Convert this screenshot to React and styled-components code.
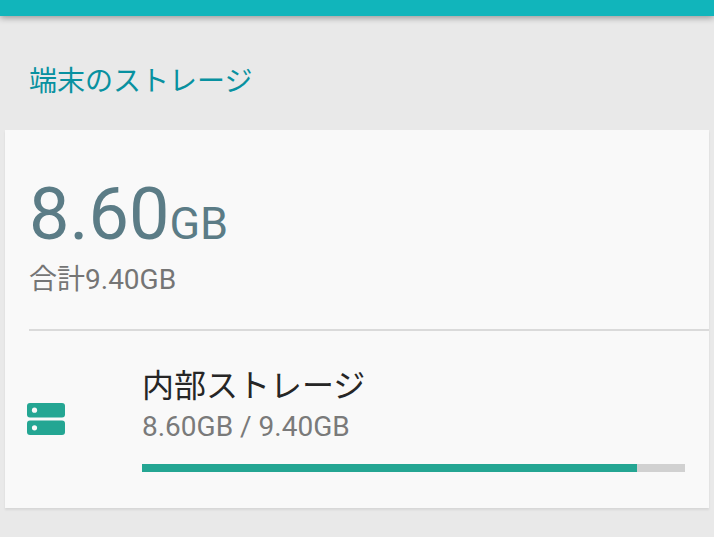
import styled, { createGlobalStyle } from 'styled-components';

const GlobalStyle = createGlobalStyle`
  * {
    box-sizing: border-box;
  }

  body {
    margin: 0;
    background-color: #e9e9e9;
    font-family: Roboto, 'Noto Sans CJK JP', sans-serif;
  }
`;

const AppBar = styled.header`
  height: 16px;
  background-color: #11b5bb;
  box-shadow: 0 2px 6px rgba(0, 0, 0, 0.35);
`;

const Page = styled.main`
  padding: 46px 5px 28px;
`;

const SectionTitle = styled.h1`
  margin: 0;
  padding: 0 24px;
  color: #0891a0;
  font-size: 28px;
  font-weight: 400;
  line-height: 40px;
`;

const Card = styled.section`
  margin-top: 28px;
  padding: 49px 0 36px;
  background-color: #f9f9f9;
  box-shadow: 0 2px 2px rgba(0, 0, 0, 0.08);
`;

const Summary = styled.div`
  margin-left: 24px;
  padding-bottom: 29px;
  border-bottom: 2px solid #dadada;
`;

const Used = styled.p`
  margin: 0;
  color: #5b7c86;
  font-size: 72px;
  line-height: 72px;
`;

const Unit = styled.span`
  font-size: 45px;
  line-height: 1;
`;

const Total = styled.p`
  margin: 0;
  padding-top: 9px;
  color: #757575;
  font-size: 28px;
  line-height: 40px;
`;

const Volume = styled.a`
  display: flex;
  align-items: center;
  padding: 31px 24px 0 22px;
  color: inherit;
  text-decoration: none;
`;

const IconSlot = styled.span`
  display: flex;
  flex: 0 0 115px;
  padding-top: 4px;
`;

const Details = styled.div`
  flex: 1;
  min-width: 0;
`;

const VolumeName = styled.h2`
  margin: 0;
  color: #262626;
  font-size: 32px;
  font-weight: 400;
  line-height: 48px;
`;

const VolumeUsage = styled.p`
  margin: 0;
  color: #7a7a7a;
  font-size: 28px;
  line-height: 34px;
`;

const Bar = styled.div`
  height: 8px;
  margin-top: 20px;
  background-color: #d1d1d1;
`;

const BarFill = styled.div`
  height: 100%;
  background-color: #24a693;
`;

function StorageIcon() {
  return (
    <svg width="38" height="32" viewBox="0 0 38 32" aria-hidden="true">
      <rect width="38" height="14.5" rx="3" fill="#24a693" />
      <rect y="17.5" width="38" height="14.5" rx="3" fill="#24a693" />
      <circle cx="7.5" cy="7.2" r="2.6" fill="#f9f9f9" />
      <circle cx="7.5" cy="24.8" r="2.6" fill="#f9f9f9" />
    </svg>
  );
}

const storage = { used: '8.60', total: '9.40', percent: 91.2 };

export default function App() {
  return (
    <>
      <GlobalStyle />
      <AppBar />
      <Page>
        <SectionTitle>端末のストレージ</SectionTitle>
        <Card>
          <Summary>
            <Used>
              {storage.used}
              <Unit>GB</Unit>
            </Used>
            <Total>合計{storage.total}GB</Total>
          </Summary>
          <Volume href="#internal">
            <IconSlot>
              <StorageIcon />
            </IconSlot>
            <Details>
              <VolumeName>内部ストレージ</VolumeName>
              <VolumeUsage>
                {storage.used}GB / {storage.total}GB
              </VolumeUsage>
              <Bar>
                <BarFill style={{ width: `${storage.percent}%` }} />
              </Bar>
            </Details>
          </Volume>
        </Card>
      </Page>
    </>
  );
}
